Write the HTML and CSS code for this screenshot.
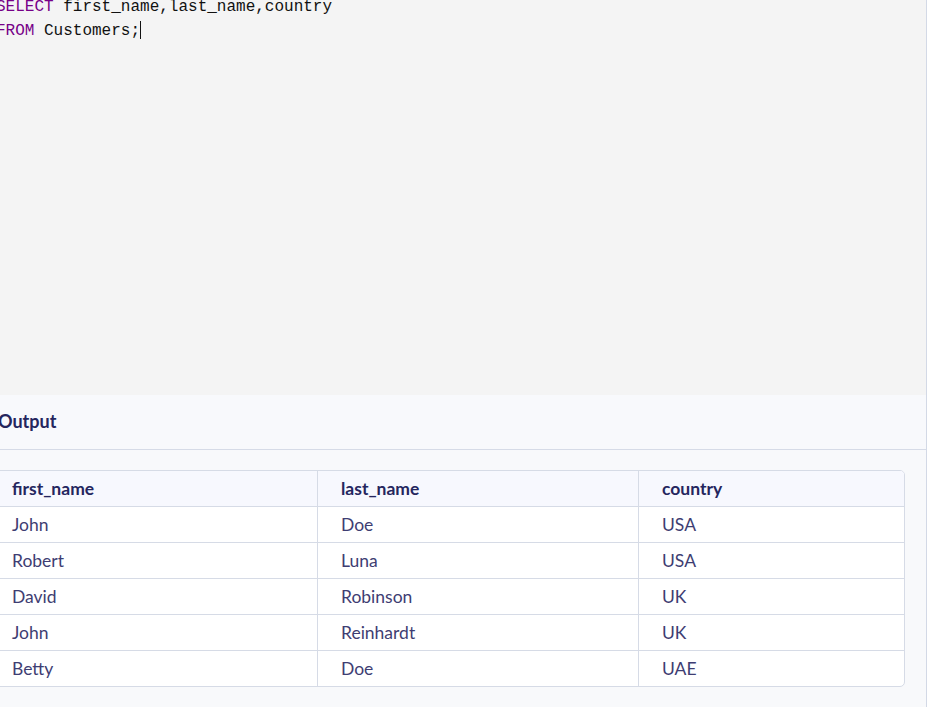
FILE: index.html
```html
<!DOCTYPE html>
<html lang="en">
<head>
<meta charset="utf-8">
<title>SQL Editor</title>
<link rel="stylesheet" href="styles.css">
</head>
<body>
<div class="app">
  <section class="editor">
    <div class="code">
      <div class="line"><span class="kw">SELECT</span> first_name,last_name,country</div>
      <div class="line"><span class="kw">FROM</span> Customers;<span class="cursor"></span></div>
    </div>
  </section>
  <section class="output">
    <header class="output-head">Output</header>
    <div class="output-body">
      <table class="result">
        <colgroup>
          <col class="c1"><col class="c2"><col class="c3">
        </colgroup>
        <thead>
          <tr><th>first_name</th><th>last_name</th><th>country</th></tr>
        </thead>
        <tbody>
          <tr><td>John</td><td>Doe</td><td>USA</td></tr>
          <tr><td>Robert</td><td>Luna</td><td>USA</td></tr>
          <tr><td>David</td><td>Robinson</td><td>UK</td></tr>
          <tr><td>John</td><td>Reinhardt</td><td>UK</td></tr>
          <tr><td>Betty</td><td>Doe</td><td>UAE</td></tr>
        </tbody>
      </table>
    </div>
  </section>
</div>
</body>
</html>
```
FILE: styles.css
```css
html, body {
  margin: 0;
  padding: 0;
  background: #ffffff;
  overflow: hidden;
}
.app {
  width: 958px;
  height: 707px;
  margin-left: -32px;
  border-right: 1px solid #d3d9e6;
  display: flex;
  flex-direction: column;
  overflow: hidden;
}
.editor {
  height: 395px;
  flex: none;
  background: #f4f4f4;
  padding-left: 28px;
  overflow: hidden;
}
.code {
  margin-top: -5px;
  font-family: "Liberation Mono", "DejaVu Sans Mono", monospace;
  font-size: 16px;
  line-height: 24px;
  color: #111111;
}
.line {
  white-space: pre;
  height: 24px;
}
.kw { color: #770088; }
.cursor {
  display: inline-block;
  width: 1px;
  height: 18px;
  background: #111;
  vertical-align: -4px;
}
.output {
  flex: 1;
  background: #f8f9fb;
  display: flex;
  flex-direction: column;
}
.output-head {
  height: 55px;
  flex: none;
  box-sizing: border-box;
  padding: 0 0 2px 30px;
  display: flex;
  align-items: center;
  border-bottom: 1px solid #d6dbe7;
  font-family: Lato, "Open Sans", sans-serif;
  font-weight: 700;
  font-size: 18px;
  color: #25265e;
  background: #f8f9fc;
}
.output-body {
  padding: 20px 20px 0 20px;
}
.result {
  width: 917px;
  table-layout: fixed;
  border-collapse: separate;
  border-spacing: 0;
  border: 1px solid #d6dbe6;
  border-radius: 5px;
  background: #ffffff;
  font-family: Lato, "Open Sans", sans-serif;
  font-size: 17.5px;
  color: #3e3d72;
  overflow: hidden;
}
.c1 { width: 329px; }
.c2 { width: 321px; }
.c3 { width: 265px; }
.result th, .result td {
  height: 35px;
  padding: 0 0 0 23px;
  text-align: left;
  border-bottom: 1px solid #d6dbe6;
  border-right: 1px solid #d6dbe6;
}
.result th:last-child, .result td:last-child { border-right: none; }
.result tbody tr:last-child td { border-bottom: none; }
.result th {
  background: #f7f8fe;
  font-weight: 700;
  color: #25265e;
}
```
